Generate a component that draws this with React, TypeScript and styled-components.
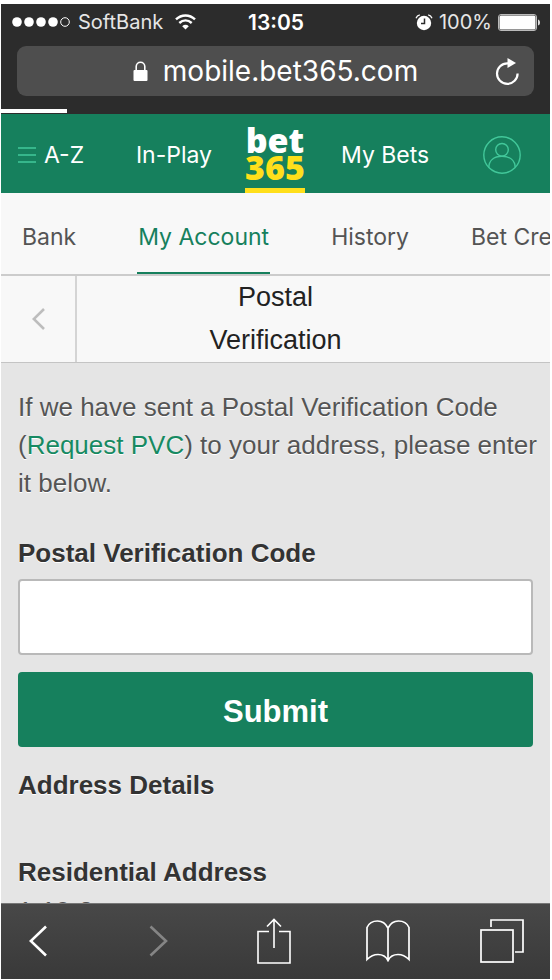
import React from 'react';
import styled, { createGlobalStyle } from 'styled-components';

const sans = '"Liberation Sans", Arial, Helvetica, sans-serif';
const system = 'Inter, "Liberation Sans", sans-serif';
const green = '#16805d';

const GlobalStyle = createGlobalStyle`
  *, *::before, *::after { box-sizing: border-box; }
  body { margin: 0; background: #fff; font-family: ${sans}; }
  button { border: 0; padding: 0; margin: 0; background: none; color: inherit; font: inherit; cursor: pointer; }
  a { color: inherit; text-decoration: none; }
  svg { display: block; flex: none; }
`;

const Screen = styled.div`
  height: 100vh;
  border: solid #fff;
  border-width: 4px 2px 1px 1px;
  display: flex;
  flex-direction: column;
  overflow: hidden;
  background: #e5e5e5;
`;

const BrowserTop = styled.div`
  flex: none;
  background: #2c2c2c;
  color: #fff;
  font-family: ${system};
`;

const StatusBar = styled.div`
  display: grid;
  grid-template-columns: 1fr auto 1fr;
  align-items: center;
  height: 36px;
  padding: 0 10px 0 11px;
  font-size: 20px;
`;

const StatusGroup = styled.div<{ $end?: boolean; $gap: number }>`
  display: flex;
  align-items: center;
  justify-content: ${(p) => (p.$end ? 'flex-end' : 'flex-start')};
  gap: ${(p) => p.$gap}px;
  color: #e6e6e6;
`;

const Carrier = styled.span`
  padding-right: 4px;
`;

const Clock = styled.time`
  font-size: 21px;
  font-weight: 600;
`;

const AddressBar = styled.div`
  display: grid;
  grid-template-columns: 40px 1fr 40px;
  align-items: center;
  height: 50px;
  margin: 6px 16px 13px;
  border-radius: 9px;
  background: #4e4e4e;
`;

const Address = styled.button`
  grid-column: 2;
  display: flex;
  justify-content: center;
  align-items: center;
  gap: 15px;
  font-size: 28px;
  line-height: 32px;
`;

const Progress = styled.progress`
  display: block;
  appearance: none;
  width: 100%;
  height: 5px;
  padding-bottom: 1px;
  border: 0;
  background: transparent;
  &::-webkit-progress-bar { background: transparent; }
  &::-webkit-progress-value { background: #fff; }
`;

const SiteHeader = styled.header`
  flex: none;
  display: grid;
  grid-template-columns: 1fr 60px 1fr;
  height: 79px;
  padding-right: 1px;
  background: ${green};
  color: #fff;
  font-family: ${system};
  font-size: 23px;
`;

const HeaderGroup = styled.nav<{ $end?: boolean }>`
  display: flex;
  align-items: center;
  justify-content: space-between;
  padding: ${(p) => (p.$end ? '2px 28px 0 36px' : '2px 33px 0 17px')};
  white-space: nowrap;
`;

const HeaderLink = styled.a`
  display: flex;
  align-items: center;
  gap: 8px;
`;

const Logo = styled.a`
  display: flex;
  flex-direction: column;
  justify-content: flex-end;
  align-items: center;
  border-bottom: 5px solid #ffdf1b;
  font-family: "Noto Sans", sans-serif;
  font-size: 34px;
  font-weight: 900;
  line-height: 27px;
  padding-bottom: 7px;
`;

const LogoNumber = styled.span`
  color: #ffdf1b;
`;

const Tabs = styled.nav`
  flex: none;
  display: flex;
  gap: 60px;
  height: 83px;
  padding-left: 20px;
  border-bottom: 2px solid #ccc;
  background: #f8f8f8;
  font-family: ${system};
  font-size: 23px;
  line-height: 88px;
  white-space: nowrap;
  overflow: hidden;
`;

const Tab = styled.a<{ $active?: boolean }>`
  flex: none;
  height: 81px;
  padding: 0 1px;
  color: ${(p) => (p.$active ? green : '#545454')};
  box-shadow: ${(p) => (p.$active ? `inset 0 -2px ${green}` : 'none')};
`;

const TitleBar = styled.div`
  flex: none;
  display: grid;
  grid-template-columns: 76px 1fr 76px;
  border-bottom: 1px solid #c4c4c4;
  background: #f8f8f8;
`;

const BackButton = styled.button`
  display: grid;
  place-items: center;
  border-right: 2px solid #d4d4d4;
`;

const Title = styled.h1`
  margin: 0;
  color: #222;
  font-size: 27px;
  font-weight: 400;
  line-height: 43px;
  text-align: center;
`;

const Content = styled.main`
  flex: 1;
  min-height: 0;
  overflow: hidden;
  padding: 25px 17px 0;
  color: #555;
  font-size: 26px;
  line-height: 38px;
  text-shadow: 0 1px #fff;
`;

const Paragraph = styled.p`
  margin: 0 -12px 32px 0;
`;

const GreenLink = styled.a`
  color: #178a62;
`;

const Label = styled.label`
  display: block;
  color: #333;
  font-weight: 700;
`;

const CodeInput = styled.input`
  display: block;
  width: 100%;
  height: 76px;
  margin: 7px 0 17px;
  padding: 0 16px;
  border: 2px solid #b9b9b9;
  border-radius: 4px;
  background: #fff;
  font: 26px ${sans};
`;

const Submit = styled.button`
  display: block;
  width: 100%;
  height: 75px;
  margin-bottom: 19px;
  padding-top: 4px;
  border-radius: 4px;
  background: ${green};
  color: #fff;
  font-size: 31px;
  font-weight: 700;
  text-shadow: none;
`;

const Heading = styled.h2<{ $space: number }>`
  margin: 0 0 ${(p) => p.$space}px;
  color: #333;
  font-size: 26px;
  font-weight: 700;
`;

const BrowserBottom = styled.footer`
  flex: none;
  display: grid;
  grid-template-columns: 120fr 107fr 109fr 114fr 43px;
  justify-items: start;
  align-items: center;
  height: 76px;
  padding: 0 27px 2px 28px;
  border-top: 1px solid #777;
  background: linear-gradient(#484848, #393939);
  color: #fff;
`;

const ToolButton = styled.button`
  &:disabled { color: #858585; }
`;

function Signal() {
  return (
    <svg width="58" height="12" viewBox="0 0 58 12" fill="#fff" aria-label="Signal">
      {[5, 17, 29, 41].map((x) => <circle key={x} cx={x} cy="6" r="4.8" />)}
      <circle cx="53" cy="6" r="4.3" fill="none" stroke="#fff" />
    </svg>
  );
}

function Wifi() {
  return (
    <svg width="21" height="16" viewBox="0 0 21 16" fill="none" stroke="#fff" strokeWidth="2.4" aria-label="Wi-Fi">
      <path d="M1 5.4C6.4.1 14.6.1 20 5.4M4.3 9C8 5.6 13 5.6 16.7 9" />
      <path d="M7.2 12.2c2-1.9 4.6-1.9 6.6 0L10.500 15.600z" fill="#fff" stroke="none" />
    </svg>
  );
}

function Alarm() {
  return (
    <svg width="18" height="17" viewBox="0 0 18 17" fill="none" aria-label="Alarm">
      <circle cx="9" cy="9" r="7.200" fill="#fff" />
      <path d="M1 4.200C1.600 2.500 3 1.200 4.800.8M17 4.200C16.400 2.500 15 1.200 13.200.8" stroke="#fff" strokeWidth="1.300" />
      <path d="M9.500 4.500V9.500H6" stroke="#2c2c2c" strokeWidth="1.500" />
    </svg>
  );
}

function Battery() {
  return (
    <svg width="42" height="17" viewBox="0 0 42 17" aria-label="Battery full">
      <rect x=".5" y=".5" width="38" height="16" rx="2.500" fill="none" stroke="#bbb" />
      <rect x="1.500" y="1.500" width="36" height="14" rx="1.500" fill="#fff" />
      <path d="M40 5.500c1.500.5 2 1.500 2 3s-.5 2.500-2 3z" fill="#ddd" />
    </svg>
  );
}

function Lock() {
  return (
    <svg width="15" height="20" viewBox="0 0 15 20" aria-hidden="true">
      <rect x=".5" y="9" width="14" height="11" rx="1" fill="#fff" />
      <path d="M3.200 10V5.500a4.300 4.300 0 0 1 8.600 0V10" fill="none" stroke="#fff" strokeWidth="1.600" />
    </svg>
  );
}

function Reload() {
  return (
    <svg width="26" height="27" viewBox="0 0 26 27" fill="none" aria-hidden="true">
      <path d="M17 5.300H13.500A10.300 10.300 0 1 0 23.600 15.500" stroke="#fff" strokeWidth="2.200" />
      <path d="M13.500 0 22 5 13.500 10z" fill="#fff" />
    </svg>
  );
}

function User() {
  return (
    <svg width="38" height="38" viewBox="0 0 38 38" fill="none" stroke="#42c79a" strokeWidth="1.400" aria-hidden="true">
      <circle cx="19" cy="19" r="18.200" />
      <circle cx="19" cy="13.800" r="6.300" />
      <path d="M5.800 31.500C6 24.500 11 20.300 19 20.300S32 24.500 32.200 31.500" />
    </svg>
  );
}

function Chevron({ right = false }: { right?: boolean }) {
  return (
    <svg width="19" height="32" viewBox="0 0 19 32" fill="none" stroke="currentColor" strokeWidth="2.600" aria-hidden="true">
      <path d={right ? 'M1.500 1.500 17 16 1.500 30.500' : 'M17 1.500 1.800 16 17 30.500'} />
    </svg>
  );
}

export default function App() {
  return (
    <>
      <GlobalStyle />
      <Screen>
        <BrowserTop>
          <StatusBar>
            <StatusGroup $gap={8}>
              <Signal />
              <Carrier>SoftBank</Carrier>
              <Wifi />
            </StatusGroup>
            <Clock>13:05</Clock>
            <StatusGroup $end $gap={6}>
              <Alarm />
              <span>100%</span>
              <Battery />
            </StatusGroup>
          </StatusBar>
          <AddressBar>
            <Address type="button">
              <Lock />
              mobile.bet365.com
            </Address>
            <button type="button" aria-label="Reload"><Reload /></button>
          </AddressBar>
          <Progress value={12} max={100} aria-label="Page loading" />
        </BrowserTop>

        <SiteHeader>
          <HeaderGroup>
            <HeaderLink href="#az">
              <svg width="18" height="16" viewBox="0 0 18 16" stroke="#42c79a" strokeWidth="1.600" aria-hidden="true">
                <path d="M0 1h18M0 8h18M0 15h18" />
              </svg>
              A-Z
            </HeaderLink>
            <HeaderLink href="#in-play">In-Play</HeaderLink>
          </HeaderGroup>
          <Logo href="#home">
            <span>bet</span>
            <LogoNumber>365</LogoNumber>
          </Logo>
          <HeaderGroup $end>
            <HeaderLink href="#my-bets">My Bets</HeaderLink>
            <button type="button" aria-label="Account"><User /></button>
          </HeaderGroup>
        </SiteHeader>

        <Tabs>
          <Tab href="#bank">Bank</Tab>
          <Tab href="#account" $active>My Account</Tab>
          <Tab href="#history">History</Tab>
          <Tab href="#bet-credits">Bet Credits</Tab>
        </Tabs>

        <TitleBar>
          <BackButton type="button" aria-label="Back">
            <svg width="13" height="22" viewBox="0 0 13 22" fill="none" stroke="#bdbdbd" strokeWidth="2.600" aria-hidden="true">
              <path d="M12 1 1.800 11 12 21" />
            </svg>
          </BackButton>
          <Title>Postal<br />Verification</Title>
        </TitleBar>

        <Content>
          <Paragraph>
            If we have sent a Postal Verification Code (<GreenLink href="#request-pvc">Request PVC</GreenLink>) to
            your address, please enter it below.
          </Paragraph>
          <Label htmlFor="pvc">Postal Verification Code</Label>
          <CodeInput id="pvc" type="text" />
          <Submit type="submit">Submit</Submit>
          <Heading $space={49}>Address Details</Heading>
          <Heading $space={1}>Residential Address</Heading>
          <div>1-10-2</div>
        </Content>

        <BrowserBottom>
          <ToolButton type="button" aria-label="Previous page"><Chevron /></ToolButton>
          <ToolButton type="button" aria-label="Next page" disabled><Chevron right /></ToolButton>
          <ToolButton type="button" aria-label="Share">
            <svg width="34" height="46" viewBox="0 0 34 46" fill="none" stroke="currentColor" strokeWidth="1.600" aria-hidden="true">
              <path d="M12 13.500H1V45H33V13.500H22M17 30V1.500M10 8.500 17 1.500 24 8.500" />
            </svg>
          </ToolButton>
          <ToolButton type="button" aria-label="Bookmarks">
            <svg width="44" height="42" viewBox="0 0 44 42" fill="none" stroke="currentColor" strokeWidth="1.700" aria-hidden="true">
              <path d="M22 40V8C19.500 3 16 1 11.500 1S3 3 1 7.500V39.500C4.500 36 8 34.500 12 34.500C17 34.500 20 36.500 22 40.500C24 36.500 27 34.500 32 34.500C36 34.500 39.500 36 43 39.500V7.500C41 3 37 1 32.500 1S24.500 3 22 8" />
            </svg>
          </ToolButton>
          <ToolButton type="button" aria-label="Tabs">
            <svg width="44" height="44" viewBox="0 0 44 44" fill="none" stroke="currentColor" strokeWidth="1.700" aria-hidden="true">
              <rect x="1" y="11" width="32" height="32" />
              <path d="M11 8V1H43V33H35" />
            </svg>
          </ToolButton>
        </BrowserBottom>
      </Screen>
    </>
  );
}
